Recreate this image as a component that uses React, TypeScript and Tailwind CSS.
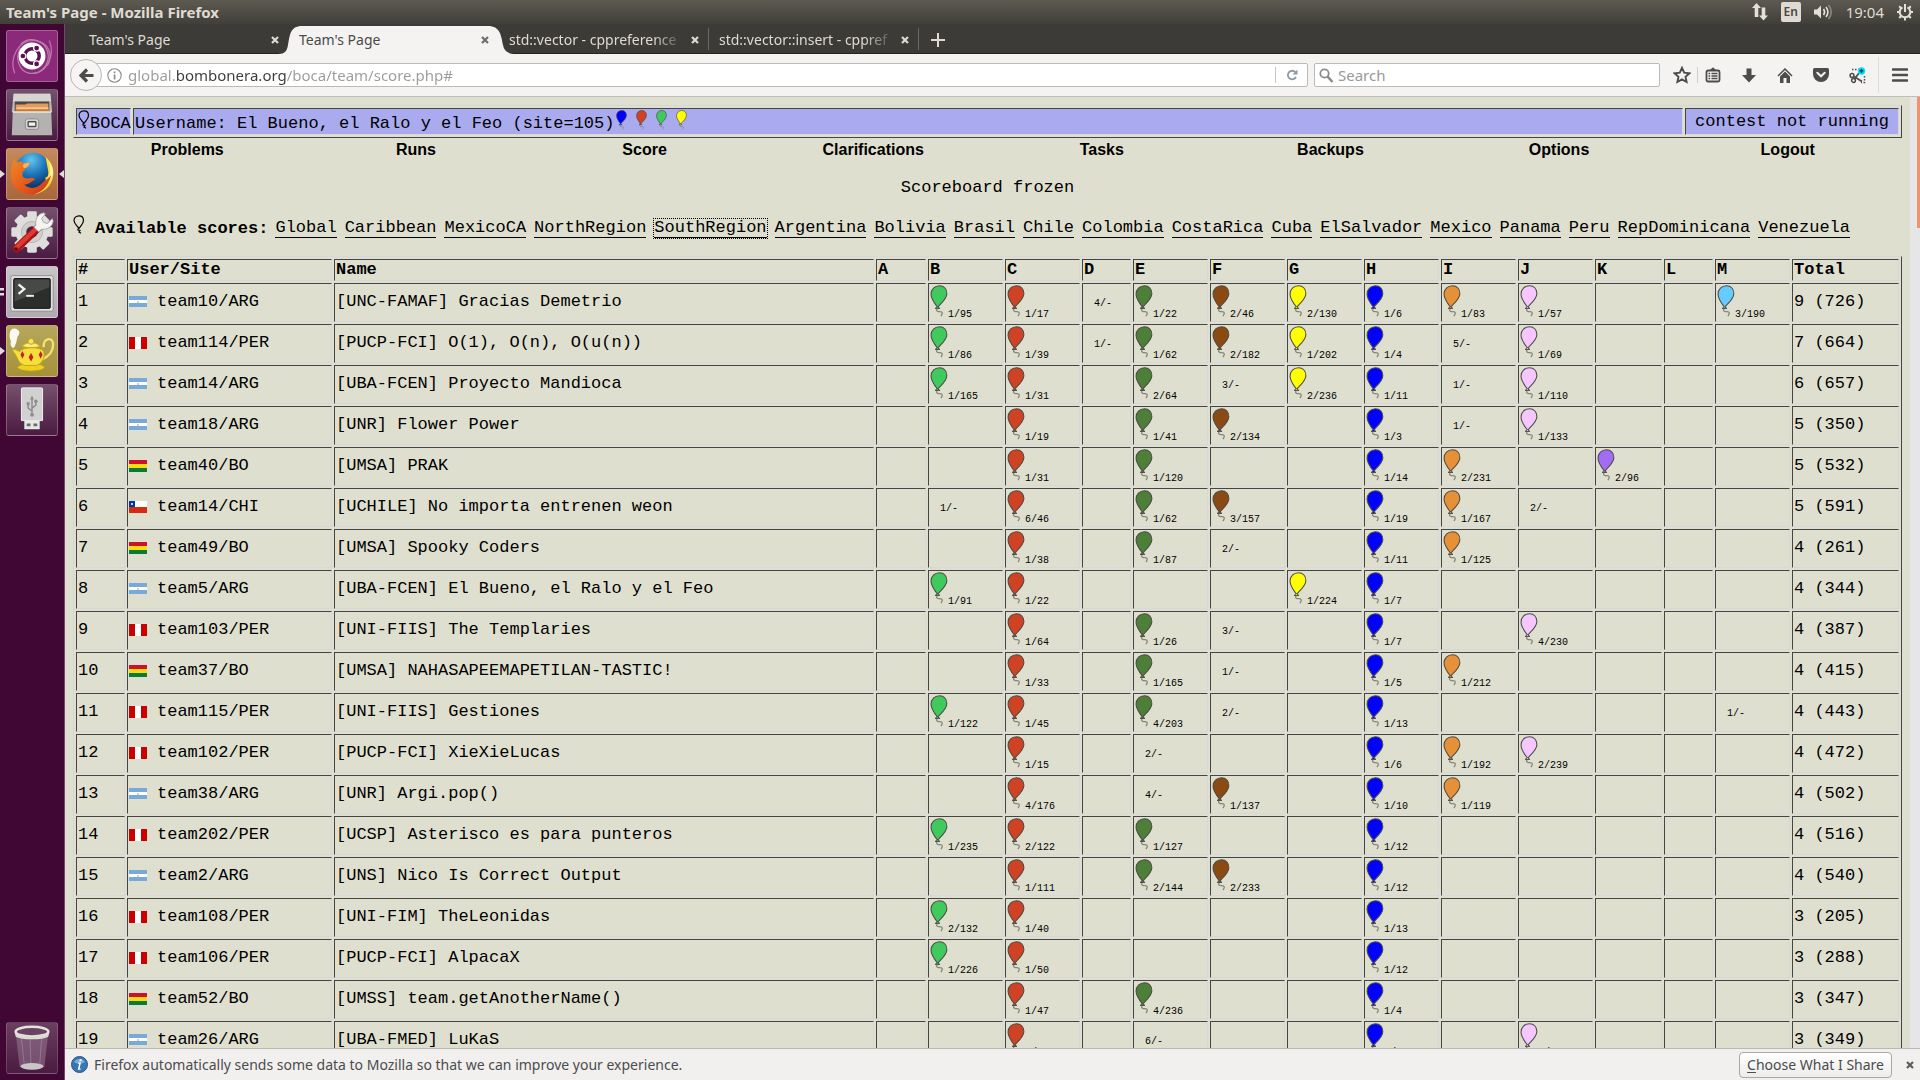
import React from "react";

const CHROME = "font-['Noto_Sans',sans-serif]";

const BALLOON: Record<string, string> = {
  B: "#40c95c",
  C: "#cf4224",
  E: "#4d7f38",
  F: "#8a4a12",
  G: "#ffff00",
  H: "#0000ff",
  I: "#e69138",
  J: "#f5c6ff",
  K: "#a26cf5",
  M: "#66ccff",
};

const LETTERS = "ABCDEFGHIJKLM".split("");
const COL_WIDTHS = [
  "w-[50px]", "w-[75px]", "w-[75px]", "w-[49px]", "w-[75px]", "w-[75px]", "w-[75px]",
  "w-[75px]", "w-[75px]", "w-[75px]", "w-[67px]", "w-[49px]", "w-[75px]",
];

type Row = [string, string, string, string];

const ROWS: Row[] = [
  ["team10/ARG", "[UNC-FAMAF] Gracias Demetrio", "B1/95 C1/17 D4/- E1/22 F2/46 G2/130 H1/6 I1/83 J1/57 M3/190", "9 (726)"],
  ["team114/PER", "[PUCP-FCI] O(1), O(n), O(u(n))", "B1/86 C1/39 D1/- E1/62 F2/182 G1/202 H1/4 I5/- J1/69", "7 (664)"],
  ["team14/ARG", "[UBA-FCEN] Proyecto Mandioca", "B1/165 C1/31 E2/64 F3/- G2/236 H1/11 I1/- J1/110", "6 (657)"],
  ["team18/ARG", "[UNR] Flower Power", "C1/19 E1/41 F2/134 H1/3 I1/- J1/133", "5 (350)"],
  ["team40/BO", "[UMSA] PRAK", "C1/31 E1/120 H1/14 I2/231 K2/96", "5 (532)"],
  ["team14/CHI", "[UCHILE] No importa entrenen weon", "B1/- C6/46 E1/62 F3/157 H1/19 I1/167 J2/-", "5 (591)"],
  ["team49/BO", "[UMSA] Spooky Coders", "C1/38 E1/87 F2/- H1/11 I1/125", "4 (261)"],
  ["team5/ARG", "[UBA-FCEN] El Bueno, el Ralo y el Feo", "B1/91 C1/22 G1/224 H1/7", "4 (344)"],
  ["team103/PER", "[UNI-FIIS] The Templaries", "C1/64 E1/26 F3/- H1/7 J4/230", "4 (387)"],
  ["team37/BO", "[UMSA] NAHASAPEEMAPETILAN-TASTIC!", "C1/33 E1/165 F1/- H1/5 I1/212", "4 (415)"],
  ["team115/PER", "[UNI-FIIS] Gestiones", "B1/122 C1/45 E4/203 F2/- H1/13 M1/-", "4 (443)"],
  ["team102/PER", "[PUCP-FCI] XieXieLucas", "C1/15 E2/- H1/6 I1/192 J2/239", "4 (472)"],
  ["team38/ARG", "[UNR] Argi.pop()", "C4/176 E4/- F1/137 H1/10 I1/119", "4 (502)"],
  ["team202/PER", "[UCSP] Asterisco es para punteros", "B1/235 C2/122 E1/127 H1/12", "4 (516)"],
  ["team2/ARG", "[UNS] Nico Is Correct Output", "C1/111 E2/144 F2/233 H1/12", "4 (540)"],
  ["team108/PER", "[UNI-FIM] TheLeonidas", "B2/132 C1/40 H1/13", "3 (205)"],
  ["team106/PER", "[PUCP-FCI] AlpacaX", "B1/226 C1/50 H1/12", "3 (288)"],
  ["team52/BO", "[UMSS] team.getAnotherName()", "C1/47 E4/236 H1/4", "3 (347)"],
  ["team26/ARG", "[UBA-FMED] LuKaS", "C3/51 E6/- H1/5 J2/233", "3 (349)"],
];

const REGIONS = [
  "Global", "Caribbean", "MexicoCA", "NorthRegion", "SouthRegion", "Argentina", "Bolivia", "Brasil", "Chile",
  "Colombia", "CostaRica", "Cuba", "ElSalvador", "Mexico", "Panama", "Peru", "RepDominicana", "Venezuela",
];

const MENU = ["Problems", "Runs", "Score", "Clarifications", "Tasks", "Backups", "Options", "Logout"];

const INSET = "border border-t-[#454541] border-l-[#454541] border-r-[#d8d8da] border-b-[#d8d8da]";
const OUTSET = "border border-t-[#d8d8da] border-l-[#d8d8da] border-r-[#454541] border-b-[#454541]";

function Balloon({ color, className }: { color: string; className: string }) {
  return (
    <svg viewBox="0 0 18 33" className={className} aria-hidden="true">
      <path d="M7 24.5c-1.500 2 .500 3 3 3 3 0 3 2 1 4.500" fill="none" stroke="#85857a" strokeWidth="1.300" />
      <path d="M9.500.8c4.700 0 7.800 3.400 7.600 8.200C16.900 14.500 11.500 18.500 7.500 23 4.500 19 .8 14 .8 9.500.8 4.500 4.500.8 9.500.8Z" fill={color} stroke="#4d4d48" strokeWidth="1.100" />
      <path d="m7.300 22.200-2.300 2h5Z" fill={color} stroke="#4d4d48" strokeWidth="1" />
    </svg>
  );
}

function OutlineBalloon() {
  return (
    <svg width="12" height="19" viewBox="0 0 12 19" fill="none" stroke="#000" strokeWidth="1.200" aria-hidden="true">
      <path d="M6 .8c3 0 4.500 2 4.500 4.700 0 3-2 4.500-4.500 8C4 10.500 1 8.500 1 5.500 1 2.800 3 .8 6 .8ZM5 13.500v1.500l2 .500-1 1.500 2 1.200" />
    </svg>
  );
}

function Flag({ site }: { site: string }) {
  return (
    <svg width="18" height="12" viewBox="0 0 18 12" shapeRendering="crispEdges" aria-hidden="true">
      {site === "ARG" && (
        <>
          <path fill="#75aadb" d="M0 0h18v11H0z" />
          <path fill="#fff" d="M0 4h18v3H0z" />
          <path fill="#f3c892" d="M8 5h2v2H8z" />
        </>
      )}
      {site === "PER" && (
        <>
          <path fill="#c00" d="M0 0h18v12H0z" />
          <path fill="#fff" d="M6 0h6v12H6z" />
        </>
      )}
      {site === "BO" && (
        <>
          <path fill="#d0102a" d="M0 0h18v4H0z" />
          <path fill="#f8dc0c" d="M0 4h18v4H0z" />
          <path fill="#0a7a34" d="M0 8h18v4H0z" />
        </>
      )}
      {site === "CHI" && (
        <>
          <path fill="#fff" d="M0 0h18v6H0z" />
          <path fill="#d52b11" d="M0 6h18v6H0z" />
          <path fill="#0038a8" d="M0 0h6v6H0z" />
          <path fill="#bccdf0" d="M2 2h2v2H2z" />
        </>
      )}
    </svg>
  );
}

function Cross({ className }: { className: string }) {
  return (
    <svg width="8" height="8" viewBox="0 0 8 8" className={className} aria-hidden="true">
      <path d="m1 1 6 6M7 1 1 7" stroke="currentColor" strokeWidth="2.200" />
    </svg>
  );
}

/* ---------- Desktop panel ---------- */

function TopPanel() {
  return (
    <header className={`${CHROME} flex h-6 shrink-0 items-center justify-between bg-linear-to-b from-[#5c5a50] to-[#413f3a] pl-1.5 pr-1.5 text-[#dfdbd2]`}>
      <h1 className="text-[15px] leading-6 font-bold">Team's Page - Mozilla Firefox</h1>
      <div className="flex items-center text-[15px] leading-6">
        <svg width="18" height="18" viewBox="0 0 18 18" fill="#e4e0d8" className="mr-3" aria-hidden="true">
          <path d="M5.500 0 10 5H7.300v9H3.700V5H1ZM12.500 17.500 8 12.500h2.700V4.500h3.600v8H17Z" />
        </svg>
        <span className="mr-3 flex h-5 w-5 items-center justify-center rounded-[2px] bg-[#dfdbd2] text-[12px] leading-4 font-semibold text-[#4a4842]">En</span>
        <svg width="21" height="18" viewBox="0 0 21 18" fill="none" strokeWidth="1.600" className="mr-3" aria-hidden="true">
          <path d="M1 6.500h3l4-4v13l-4-4H1Z" fill="#e4e0d8" />
          <path d="M10.500 6c1.300 1.800 1.300 4.200 0 6M13 4c2.300 3 2.300 7 0 10" stroke="#e4e0d8" />
          <path d="M15.500 2c3.500 4.500 3.500 9.500 0 14" stroke="#8b887f" />
        </svg>
        <time className="mr-3">19:04</time>
        <svg width="18" height="18" viewBox="0 0 18 18" fill="none" stroke="#e4e0d8" aria-hidden="true">
          <path d="M6.500 4.400a5.300 5.300 0 1 0 5 0" strokeWidth="2" />
          <path d="M9 1v8" strokeWidth="2" />
          <path d="M9 14.500v3M1 9h3M14 9h3M3.200 3.200l2 2M14.800 3.200l-2 2M3.200 15l2-2M14.800 15l-2-2" strokeWidth="2" />
        </svg>
      </div>
    </header>
  );
}

/* ---------- Launcher ---------- */

function DashIcon() {
  return (
    <svg viewBox="0 0 52 52">
      <g fill="none" stroke="#d79cc9" strokeWidth="1.200" opacity=".7">
        <path d="M8 44C2 28 12 8 30 10c14 2 18 16 12 26" />
        <path d="M44 10c6 14-2 36-20 34C12 42 8 28 14 18" />
        <path d="M14 14C24 4 42 10 43 26c0 10-8 18-16 18" />
      </g>
      <circle cx="26" cy="26" r="14" fill="#fff" />
      <circle cx="26" cy="26" r="7.500" fill="none" stroke="#5d0f52" strokeWidth="3.600" />
      <g fill="#5d0f52" stroke="#fff" strokeWidth="1.300">
        <circle cx="16.500" cy="26" r="3.100" />
        <circle cx="30.800" cy="17.800" r="3.100" />
        <circle cx="30.800" cy="34.200" r="3.100" />
      </g>
    </svg>
  );
}

function FilesIcon() {
  return (
    <svg viewBox="0 0 52 52">
      <path d="M7 4h38l2 19H5Z" fill="#bdbcba" />
      <path d="M7 4h38l1 8H6Z" fill="#d6d5d3" />
      <path d="M8 12h36v12H8Z" fill="#4b4743" />
      <path d="M9 15h10l2-1h22v8H9Z" fill="#e59a5c" />
      <path d="M10 18h33v5H10Z" fill="#f3c79a" />
      <path d="M9 20h35v4H9Z" fill="#d9731f" />
      <path d="M6 22h40l1 25H5Z" fill="#b3b2b0" />
      <path d="M6 22h40v2H6Z" fill="#dddcda" />
      <rect x="19" y="30" width="14" height="11" rx="2.500" fill="#d4d3d1" stroke="#8e8d8b" />
      <rect x="22" y="33" width="8" height="5" rx=".5" fill="#f3f3f3" stroke="#4e4d4c" strokeWidth="1.400" />
    </svg>
  );
}

function FirefoxIcon() {
  return (
    <svg viewBox="0 0 52 52">
      <defs>
        <radialGradient id="globe" cx=".45" cy=".2" r=".8">
          <stop offset="0" stopColor="#62c5ee" />
          <stop offset=".5" stopColor="#1c74b8" />
          <stop offset="1" stopColor="#0b2a5c" />
        </radialGradient>
        <linearGradient id="fox" x1="0" y1="0" x2="1" y2="1">
          <stop offset="0" stopColor="#f08a24" />
          <stop offset=".6" stopColor="#e4561c" />
          <stop offset="1" stopColor="#c93014" />
        </linearGradient>
      </defs>
      <circle cx="27" cy="23" r="19" fill="url(#globe)" />
      <path d="M40 8c6 5 9 12 8 20-1 10-10 18-20 19 9-4 13-11 12-18 2 1 3-1 3-5-1-6-2-11-3-16Z" fill="#fbd935" />
      <path d="M43 12c3 8 2 17-2 24 4-2 7-7 7-12 0-4-2-9-5-12Z" fill="#fff3a0" />
      <path d="M8 9c0 3 1 4 2 5 3-2 6-1 8 1l5-1c1 3-1 4-4 6 0 2-1 3-3 4 1 1 0 3 0 4 2 3 6 3 9 2 3 0 4 1 4 2-3 1-6 5-11 5 5 5 13 5 20-3 3-2 6-4 8-7-3 12-11 20-21 20C12 47 4 38 4 27c0-6 1-13 4-18Z" fill="url(#fox)" />
      <path d="M18 15l5-1c1 3-1 4-4 6-3-1-3-3-1-5Z" fill="#f7b064" />
    </svg>
  );
}

function SettingsIcon() {
  return (
    <svg viewBox="0 0 52 52">
      <g fill="#dededc">
        <circle cx="26" cy="25" r="17" />
        {[0, 45, 90, 135].map((a) => (
          <rect key={a} x="21" y="3.500" width="10" height="43" rx="1.500" transform={`rotate(${a} 26 25)`} />
        ))}
      </g>
      <circle cx="26" cy="25" r="11" fill="#cfcfcd" stroke="#b5b4b3" />
      <circle cx="26" cy="25" r="6" fill="#512347" />
      <path d="m10 42 23-22" stroke="#a81413" strokeWidth="8" strokeLinecap="round" />
      <path d="m10 41 22-21" stroke="#de3a33" strokeWidth="4.500" strokeLinecap="round" />
      <path d="M30 18c-1-6 2-12 8-13l2 1-4 5 2 4 4 1 5-5 1 2c0 6-6 10-12 9l-3 3-5-5Z" fill="#f4f4f3" stroke="#9b9a99" strokeWidth=".8" />
      <circle cx="9.500" cy="42.500" r="1.800" fill="#511" />
    </svg>
  );
}

function TerminalIcon() {
  return (
    <svg viewBox="0 0 52 52">
      <rect x="4" y="9" width="44" height="37" rx="2" fill="#e2e1e1" stroke="#8f8d8f" />
      <rect x="7" y="12" width="38" height="31" rx="1" fill="#2c2e2c" stroke="#111" />
      <path d="M8 13h36v8L8 36Z" fill="#474947" />
      <path d="m12 18 6 5-6 5" fill="none" stroke="#f2f2f2" strokeWidth="2.400" />
      <path d="M20 30h8" stroke="#f2f2f2" strokeWidth="2" />
    </svg>
  );
}

function LampIcon() {
  return (
    <svg viewBox="0 0 52 52">
      <path d="M3 7c0-4 5-6 8-3 3 2 2 5 0 7-1 3-1 8-4 12-3-1-4-4-3-7-1-3-2-6-1-9Z" fill="#fff" opacity=".92" />
      <path d="M38 22c0-10 10-11 10-3 0 8-5 13-12 16" fill="none" stroke="#f4e16a" strokeWidth="2.400" />
      <ellipse cx="25" cy="43" rx="14" ry="4" fill="#ecd025" stroke="#b89a10" />
      <path d="M6 24c4 0 5 3 8 2 2-4 20-5 24 0 2 6-1 13-7 15H18C11 39 11 31 6 26Z" fill="#f5df3c" stroke="#c3a516" />
      <path d="M16 21c3-5 15-5 18 0-3 2-15 2-18 0Z" fill="#f9eb80" stroke="#c3a516" />
      <circle cx="25" cy="16" r="3" fill="#f9e65c" stroke="#c3a516" />
      <path d="m16 26 2 4-2 4-2-4ZM25 28l2.500 4.500L25 37l-2.500-4.500ZM35 26l2 4-2 4-2-4Z" fill="#c8201c" />
    </svg>
  );
}

function UsbIcon() {
  return (
    <svg viewBox="0 0 52 52">
      <path d="M15 4q0-1 1-1h20q1 0 1 1v33H15Z" fill="#d2d1d2" stroke="#f0f0f0" />
      <path d="M18 37h16v9H18Z" fill="#e8e8e8" />
      <path d="M20.500 40h4v3h-4ZM27.500 40h4v3h-4Z" fill="#6d6a6d" />
      <path d="M26 14v16M26 27l-4-3v-4M26 24l4-3v-4" fill="none" stroke="#8d8b8e" strokeWidth="1.500" />
      <g fill="#8d8b8e">
        <path d="m26 11 2 4h-4ZM20.500 18h3v3h-3Z" />
        <circle cx="30" cy="17" r="1.800" />
        <circle cx="26" cy="31" r="2" />
      </g>
    </svg>
  );
}

function TrashIcon() {
  return (
    <svg viewBox="0 0 52 52">
      <path d="M9 10h34l-4 35c-3 4-23 4-26 0Z" fill="#a58aa0" opacity=".45" />
      <path d="M15 16l3 28M24 17l1 29M36 16l-2 28" stroke="#cbb9c8" opacity=".35" />
      <ellipse cx="26" cy="45" rx="12" ry="3.500" fill="#c9c5c8" />
      <ellipse cx="26" cy="9" rx="17" ry="5" fill="#6b4463" stroke="#e4e3df" strokeWidth="2.600" />
      <path d="M8 10c4 5 32 5 36 0l-1 4c-5 4-29 4-34 0Z" fill="#dcdbd6" />
    </svg>
  );
}

const APPS = [
  { name: "Search your computer", icon: <DashIcon />, tile: "bg-[#8b2a78]", marks: "" },
  { name: "Files", icon: <FilesIcon />, tile: "bg-linear-to-b from-[#75506c] to-[#4b1b41]", marks: "" },
  { name: "Firefox Web Browser", icon: <FirefoxIcon />, tile: "bg-linear-to-b from-[#c48a5c] to-[#a9663c]", marks: "both" },
  { name: "System Settings", icon: <SettingsIcon />, tile: "bg-linear-to-b from-[#75506c] to-[#4b1b41]", marks: "" },
  { name: "Terminal", icon: <TerminalIcon />, tile: "bg-linear-to-b from-[#c9c4c8] to-[#b1abb1]", marks: "bars" },
  { name: "Lamp", icon: <LampIcon />, tile: "bg-linear-to-b from-[#b6a75c] to-[#a5913a]", marks: "left" },
  { name: "USB drive", icon: <UsbIcon />, tile: "bg-linear-to-b from-[#75506c] to-[#4b1b41]", marks: "" },
];

function Launcher() {
  return (
    <nav aria-label="Launcher" className="flex w-[65px] shrink-0 flex-col justify-between border-r border-[#7b4470] bg-[#400634] pt-1.5 pb-1.5">
      <ul className="flex flex-col gap-[7px]">
        {APPS.map((a) => (
          <li key={a.name} className="relative flex justify-center">
            <button type="button" aria-label={a.name} className={`h-13 w-13 rounded-[3px] border border-white/25 ${a.tile}`}>
              {a.icon}
            </button>
            {(a.marks === "left" || a.marks === "both") && (
              <svg width="5" height="8" viewBox="0 0 5 8" className="absolute top-1/2 left-0 -translate-y-1/2" aria-hidden="true"><path d="M0 0l5 4-5 4Z" fill="#ddd" /></svg>
            )}
            {a.marks === "both" && (
              <svg width="5" height="8" viewBox="0 0 5 8" className="absolute top-1/2 right-0 -translate-y-1/2" aria-hidden="true"><path d="M5 0 0 4l5 4Z" fill="#ddd" /></svg>
            )}
            {a.marks === "bars" && (
              <svg width="4" height="8" viewBox="0 0 4 8" className="absolute top-1/2 left-0 -translate-y-1/2" aria-hidden="true"><path d="M0 0h4v2.500H0ZM0 5h4v2.500H0Z" fill="#ddd" /></svg>
            )}
          </li>
        ))}
      </ul>
      <button type="button" aria-label="Trash" className="h-13 w-13 self-center rounded-[3px] border border-white/15 bg-linear-to-b from-[#6a3f60] to-[#4b1b41]">
        <TrashIcon />
      </button>
    </nav>
  );
}

/* ---------- Browser chrome ---------- */

const TABS = ["Team's Page", "Team's Page", "std::vector - cppreference", "std::vector::insert - cppref"];

function TabStrip() {
  return (
    <div role="tablist" className={`${CHROME} flex h-[30px] shrink-0 border-b border-[#24231f] bg-[#3c3b37] pl-3.5 text-[14px] leading-5 text-[#dfdbd2]`}>
      {TABS.map((t, i) => {
        const active = i === 1;
        return (
          <div
            key={i}
            role="tab"
            aria-selected={active}
            className={`relative flex w-[210px] items-center px-2.5 pt-0.5 ${active ? "-mb-px text-[#4a4a4a]" : ""}`}
          >
            {active && (
              <svg viewBox="0 0 238 28" preserveAspectRatio="none" className="absolute bottom-0 -left-[11px] h-7 w-[238px]" aria-hidden="true">
                <path d="M0 28c7 0 9-3 10-9C12 9 12 0 24 0h186c12 0 13 9 15 19 1 6 5 9 13 9Z" fill="#f4f3f1" />
              </svg>
            )}
            <span className={`relative flex-1 whitespace-nowrap ${i > 1 ? "[mask-image:linear-gradient(to_right,#000_82%,transparent)]" : ""}`}>{t}</span>
            <button type="button" aria-label="Close tab" className="relative ml-1.5"><Cross className={active ? "text-[#6e6d6b]" : "text-[#dfdbd2]"} /></button>
            {i > 1 && <span className="absolute top-1 right-0 h-[22px] w-px bg-[#6a6964]" />}
          </div>
        );
      })}
      <button type="button" aria-label="New tab" className="ml-3 flex items-center pt-0.5">
        <svg width="14" height="14" viewBox="0 0 14 14" aria-hidden="true"><path d="M7 0v14M0 7h14" stroke="#dfdbd2" strokeWidth="2" /></svg>
      </button>
    </div>
  );
}

function ToolButton({ label, children }: { label: string; children: React.ReactNode }) {
  return (
    <button type="button" aria-label={label} className="flex h-6 w-9 items-center justify-center text-[#4c4c4c]">
      {children}
    </button>
  );
}

function Toolbar() {
  return (
    <div className={`${CHROME} flex h-[43px] shrink-0 items-center border-b border-[#bfbebc] bg-[#f4f3f1] pl-[5px] text-[15px] leading-5`}>
      <button type="button" aria-label="Back" className="relative z-10 flex h-8 w-8 shrink-0 items-center justify-center rounded-full border border-[#b9b8b6] bg-[#f6f5f4]">
        <svg width="15" height="15" viewBox="0 0 15 15" aria-hidden="true"><path d="M14.500 7.500H3M8 1.500l-6 6 6 6" fill="none" stroke="#4c4c4c" strokeWidth="3.200" /></svg>
      </button>
      <div className="-ml-2 flex h-6 min-w-0 flex-1 items-center rounded-r-[2px] border border-[#bbbab8] bg-white pl-3">
        <svg width="15" height="15" viewBox="0 0 15 15" className="mr-1.5 shrink-0" aria-hidden="true">
          <circle cx="7.500" cy="7.500" r="6.700" fill="none" stroke="#8a8a8a" strokeWidth="1.100" />
          <path d="M6.700 6.500h1.700v5H6.700ZM6.700 3.500h1.700v1.800H6.700Z" fill="#8a8a8a" />
        </svg>
        <input
          aria-label="Address"
          readOnly
          value="global.bombonera.org/boca/team/score.php#"
          className="min-w-0 flex-1 bg-[linear-gradient(to_right,#9b9b9b_48px,#3c3c3c_48px,#3c3c3c_158px,#9b9b9b_158px)] bg-clip-text text-transparent outline-none"
        />
        <button type="button" aria-label="Reload" className="flex h-4 w-8 items-center justify-center border-l border-[#c8c7c5]">
          <svg width="12" height="12" viewBox="0 0 12 12" aria-hidden="true">
            <path d="M9.500 3.300A4.300 4.300 0 1 0 10 8" fill="none" stroke="#8d99a6" strokeWidth="1.800" />
            <path d="M11.500.5v5h-5Z" fill="#8d99a6" />
          </svg>
        </button>
      </div>
      <label className="ml-1.5 flex h-6 w-[346px] items-center rounded-[2px] border border-[#bbbab8] bg-white pl-1">
        <svg width="15" height="15" viewBox="0 0 15 15" fill="none" stroke="#8a8a8a" className="mr-1 shrink-0" aria-hidden="true">
          <circle cx="5.500" cy="5.500" r="4.200" strokeWidth="1.800" />
          <path d="m8.500 8.500 5 5.500" strokeWidth="2.600" />
        </svg>
        <input aria-label="Search" placeholder="Search" className="min-w-0 flex-1 outline-none placeholder:text-[#999]" />
      </label>
      <div className="ml-1 flex items-center">
        <ToolButton label="Bookmark this page">
          <svg width="18" height="18" viewBox="0 0 18 18" aria-hidden="true"><path d="m9 1.800 2.200 4.900 5.200.6-3.900 3.500 1.100 5.200L9 13.400 4.400 16l1.100-5.200L1.600 7.300l5.200-.6Z" fill="none" stroke="currentColor" strokeWidth="1.900" /></svg>
        </ToolButton>
        <span className="-mx-[3px] h-4 w-px bg-[#cfcecc]" />
        <ToolButton label="Bookmarks">
          <svg width="16" height="16" viewBox="0 0 16 16" aria-hidden="true">
            <rect x="1.500" y="3.500" width="13" height="11" rx="1.500" fill="none" stroke="currentColor" strokeWidth="1.800" />
            <path d="M5 3.500 8 .8l3 2.700Z" fill="currentColor" stroke="currentColor" />
            <path d="M3.500 6.500h1.700M6.500 6.500h6M3.500 9h1.700M6.500 9h6M3.500 11.500h1.700M6.500 11.500h6" stroke="currentColor" strokeWidth="1.400" />
          </svg>
        </ToolButton>
        <ToolButton label="Downloads">
          <svg width="14" height="15" viewBox="0 0 14 15" aria-hidden="true"><path d="M4.500.5h5v6.500H14l-7 7.500L0 7h4.500Z" fill="currentColor" /></svg>
        </ToolButton>
        <ToolButton label="Home">
          <svg width="16" height="15" viewBox="0 0 16 15" aria-hidden="true">
            <path d="m1 8 7-7 7 7" fill="none" stroke="currentColor" strokeWidth="1.500" />
            <path d="M3 8.500 8 3.500l5 5V15H9.500v-5h-3v5H3Z" fill="currentColor" />
          </svg>
        </ToolButton>
        <ToolButton label="Pocket">
          <svg width="16" height="14" viewBox="0 0 16 14" aria-hidden="true">
            <path d="M1.500 0h13Q16 0 16 1.500V6a8 8 0 0 1-16 0V1.500Q0 0 1.500 0Z" fill="currentColor" />
            <path d="m4.300 4.800 3.700 3.500 3.700-3.500" fill="none" stroke="#f4f3f1" strokeWidth="2" strokeLinecap="round" />
          </svg>
        </ToolButton>
        <ToolButton label="Clip">
          <svg width="17" height="17" viewBox="0 0 17 17" fill="none" stroke="currentColor" aria-hidden="true">
            <path d="M3 2.500h7M15.500 9v6.500H12" strokeDasharray="1.500 1.500" strokeWidth="1.500" />
            <circle cx="3" cy="8.500" r="1.900" strokeWidth="1.500" />
            <circle cx="4.500" cy="13.500" r="1.900" strokeWidth="1.500" />
            <path d="m5 9.500 8 5M5.500 12 10 6" strokeWidth="1.700" />
            <circle cx="12.500" cy="4" r="3.700" fill="#00e5ff" stroke="none" />
            <path d="M12.500 1.800v4.400M10.600 3l3.800 2M14.400 3l-3.800 2" stroke="#045" strokeWidth="1.100" />
          </svg>
        </ToolButton>
        <span className="ml-[3px] h-9 w-px bg-[#dddcda]" />
        <button type="button" aria-label="Menu" className="flex h-6 w-[41px] items-center justify-center text-[#4c4c4c]">
          <svg width="16" height="14" viewBox="0 0 16 14" aria-hidden="true"><path d="M1 1.500h14M1 7h14M1 12.500h14" stroke="currentColor" strokeWidth="2.600" strokeLinecap="round" /></svg>
        </button>
      </div>
    </div>
  );
}

/* ---------- Page ---------- */

function ScoreCell({ letter, value }: { letter: string; value?: string }) {
  if (!value) return <td className={INSET} />;
  if (value.endsWith("-")) return <td className={`${INSET} pt-0.5 pl-[11px] text-[10px] leading-3`}>{value}</td>;
  return (
    <td className={`${INSET} p-px pb-0 align-top text-[10px] leading-[10px]`}>
      <span className="flex items-baseline">
        <Balloon color={BALLOON[letter]} className="h-8 w-[18px] shrink-0" />
        {value}
      </span>
    </td>
  );
}

function Scoreboard() {
  return (
    <table className={`${OUTSET} w-full table-fixed border-separate border-spacing-[2px] text-left leading-[18px]`}>
      <colgroup>
        <col className="w-[49px]" />
        <col className="w-[205px]" />
        <col />
        {COL_WIDTHS.map((w, i) => <col key={i} className={w} />)}
        <col className="w-[107px]" />
      </colgroup>
      <thead>
        <tr>
          {["#", "User/Site", "Name", ...LETTERS, "Total"].map((h) => (
            <th key={h} scope="col" className={`${INSET} p-px font-bold`}>{h}</th>
          ))}
        </tr>
      </thead>
      <tbody>
        {ROWS.map(([user, name, scores, total], i) => {
          const byLetter = Object.fromEntries(scores.split(" ").map((s) => [s[0], s.slice(1)]));
          return (
            <tr key={user} className="h-[39px]">
              <td className={`${INSET} px-px pb-0.5`}>{i + 1}</td>
              <td className={`${INSET} px-px pb-0.5`}>
                <span className="flex items-center gap-2.5"><Flag site={user.split("/")[1]} />{user}</span>
              </td>
              <td className={`${INSET} overflow-hidden px-px pb-0.5 whitespace-nowrap`}>{name}</td>
              {LETTERS.map((l) => <ScoreCell key={l} letter={l} value={byLetter[l]} />)}
              <td className={`${INSET} px-px pb-0.5 whitespace-nowrap`}>{total}</td>
            </tr>
          );
        })}
      </tbody>
    </table>
  );
}

function Page() {
  return (
    <div className="flex min-h-0 flex-1">
      <main className="min-w-0 flex-1 overflow-hidden bg-[#dfdfcf] p-2 font-['Liberation_Mono',monospace] text-[17px] leading-[18px] text-black">
        <div className={`${OUTSET} flex gap-[2px] p-[2px]`}>
          <div className={`${INSET} flex h-[27px] w-[55px] items-end bg-[#aaaaee] p-px`}>
            <span className="self-start"><OutlineBalloon /></span>BOCA
          </div>
          <div className={`${INSET} flex h-[27px] flex-1 items-end bg-[#aaaaee] p-px`}>
            Username: El Bueno, el Ralo y el Feo (site=105)
            <span className="ml-0.5 flex gap-[9px] self-start">
              {["H", "C", "B", "G"].map((l) => <Balloon key={l} color={BALLOON[l]} className="h-5 w-[11px]" />)}
            </span>
          </div>
          <div className={`${INSET} flex h-[27px] w-[214px] items-center justify-center bg-[#aaaaee]`}>contest not running</div>
        </div>
        <nav className="grid grid-cols-8 pt-[3px] text-center font-['Liberation_Sans',sans-serif] text-[16px] font-bold">
          {MENU.map((m) => <a key={m} href="#">{m}</a>)}
        </nav>
        <p className="mt-5 text-center">Scoreboard frozen</p>
        <div className="mt-[22px] mb-[18px] flex items-end gap-2 whitespace-nowrap">
          <span className="mr-0.5 mb-1 -mt-1"><OutlineBalloon /></span>
          <b className="-mr-px">Available scores:</b>
          {REGIONS.map((r) => (
            <a key={r} href="#" className={`border-b border-black ${r === "SouthRegion" ? "outline-1 outline-dotted outline-black" : ""}`}>{r}</a>
          ))}
        </div>
        <Scoreboard />
      </main>
      <div className="flex w-2.5 justify-end bg-[#e6e6e6]" aria-hidden="true">
        <div className="h-[131px] w-[3px] bg-[#f0936a]" />
      </div>
    </div>
  );
}

function NotificationBar() {
  return (
    <div role="status" className={`${CHROME} flex h-8 shrink-0 items-center border-t border-[#b9b8b6] bg-[#f1f0ef] px-1.5 text-[14px] leading-5 text-[#4c4c4c]`}>
      <svg width="17" height="17" viewBox="0 0 17 17" className="mr-1.5" aria-hidden="true">
        <circle cx="8.500" cy="8.500" r="8" fill="#3a76b0" stroke="#25578c" />
        <path d="M3 6a6 5 0 0 1 11 0c-3 2-8 2-11 0Z" fill="#7fabd6" />
        <path d="M8.800 3.200h2l-.5 2h-2ZM7.200 6.500h2.800l-1.400 6h1.200l-.3 1.200H6.800l1.300-6H7Z" fill="#fff" />
      </svg>
      <p className="flex-1">Firefox automatically sends some data to Mozilla so that we can improve your experience.</p>
      <button type="button" className="mr-3.5 h-[26px] rounded-[4px] border border-[#a9a8a6] bg-linear-to-b from-white to-[#ececeb] px-[7px]">
        <span className="underline underline-offset-2">C</span>hoose What I Share
      </button>
      <button type="button" aria-label="Dismiss"><Cross className="text-[#5c5c5c]" /></button>
    </div>
  );
}

export default function App() {
  return (
    <div className="flex h-screen flex-col overflow-hidden">
      <TopPanel />
      <div className="flex min-h-0 flex-1">
        <Launcher />
        <div className="flex min-w-0 flex-1 flex-col">
          <TabStrip />
          <Toolbar />
          <Page />
          <NotificationBar />
        </div>
      </div>
    </div>
  );
}
